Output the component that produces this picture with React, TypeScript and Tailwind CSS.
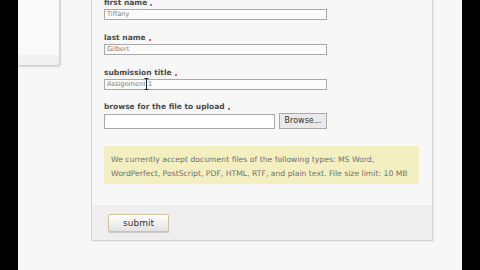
export default function App() {
  const font = { fontFamily: '"DejaVu Sans", Verdana, sans-serif' }

  return (
    <div className="flex h-[270px] w-[480px] overflow-hidden bg-black" style={font}>
      <div className="w-[18px] shrink-0 bg-black" />

      {/* page */}
      <div className="relative flex w-[444px] shrink-0 items-start bg-[#f7f7f7]">
        {/* sidebar card */}
        <div className="-mt-[10px] h-[76px] w-[42px] shrink-0 rounded-br-[4px] border-r border-b border-[#cfcfcf] bg-[#fafafa] shadow-[1px_1px_2px_rgba(0,0,0,0.12)]">
          <div className="mt-[65px] h-[10px] rounded-br-[4px] bg-[#f0f0f0]" />
        </div>

        {/* form panel */}
        <div className="relative -mt-[20px] ml-[31px] w-[342px] shrink-0 border border-[#d2d2d2] bg-[#f7f7f7] shadow-[2px_1px_0_#ececec]">
          <div className="px-[12px] pt-[17px]">
            <Field label="first name" value="Tiffany" />
            <Field label="last name" value="Gilbert" />
            <Field label="submission title" value="Assignment 1" cursor />

            {/* file */}
            <div className="-mt-[1px] flex flex-col">
              <Label text="browse for the file to upload" />
              <div className="mt-[1px] flex items-center gap-[4px]">
                <div className="h-[15px] w-[171px] border border-[#a9a9a9] bg-white" />
                <button className="h-[16px] w-[48px] border border-[#a9a9a9] bg-[#e9e9e9] text-[8px] leading-[14px] text-[#333]">
                  Browse...
                </button>
              </div>
            </div>

            <div className="mt-[17px] h-[38px] w-[315px] bg-[#f3efc0] px-[7px] pt-[7px] text-[7.7px] leading-[14px] text-[#707070]">
              We currently accept document files of the following types: MS Word, WordPerfect, PostScript, PDF, HTML, RTF, and plain text. File size limit: 10 MB
            </div>
          </div>

          {/* footer */}
          <div className="mt-[21px] flex h-[35px] items-center bg-[#eeeeee] px-[16px]">
            <button className="h-[18px] w-[61px] rounded-[2px] border border-[#cdc49a] bg-gradient-to-b from-[#ffffff] to-[#e2e2e2] text-[9px] leading-[16px] text-[#333] shadow-[0_1px_1px_rgba(0,0,0,0.15)]">
              submit
            </button>
          </div>
        </div>
      </div>

      <div className="w-[18px] shrink-0 bg-black" />
    </div>
  )
}

function Label({ text }: { text: string }) {
  return (
    <div className="flex h-[10px] items-center whitespace-nowrap text-[7.5px] font-bold leading-[10px] text-[#4a4a4a]">
      {text}
      <span className="ml-[3px] mt-[3px] h-[2px] w-[2px] rounded-full bg-[#d0302a]" />
    </div>
  )
}

function Field({ label, value, cursor }: { label: string; value: string; cursor?: boolean }) {
  return (
    <div className="mb-[13px] flex flex-col">
      <Label text={label} />
      <div className="relative mt-[1px] flex h-[11px] w-[223px] items-center whitespace-nowrap border border-[#a9a9a9] bg-[#fbfbfb] px-[2px] text-[6.6px] text-[#7a7a7a]">
        {value}
        {cursor && (
          <svg className="absolute left-[39px] top-[-2px]" width="5" height="12" viewBox="0 0 5 12">
            <path d="M0.5 0.5h4M2.5 0.5v11M0.5 11.5h4" stroke="#222" strokeWidth="1" fill="none" />
          </svg>
        )}
      </div>
    </div>
  )
}
